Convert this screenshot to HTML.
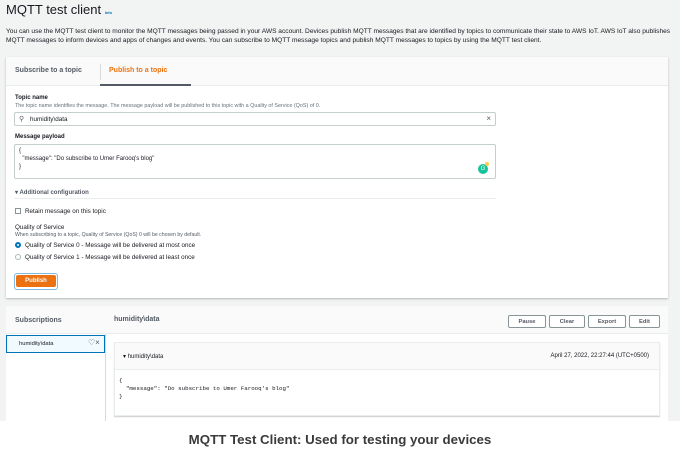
<!DOCTYPE html>
<html><head><style>
*{box-sizing:border-box;margin:0;padding:0}
body{width:680px;height:452px;background:#fff;font-family:"Liberation Sans",sans-serif;color:#16191f;position:relative;overflow:hidden}
.bg{position:absolute;left:0;top:0;width:680px;height:421px;background:#f2f3f3}
.abs{position:absolute}
.t{font-size:6.3px;white-space:nowrap}
.panel{position:absolute;background:#fff;box-shadow:0 1px 2px rgba(0,0,0,.25)}
.inp{position:absolute;border:1px solid #c6cdce;background:#fff;border-radius:2px}
.btn{position:absolute;border:1px solid #879596;background:#fff;font-size:5.8px;font-weight:bold;color:#545b64;text-align:center;line-height:12px;height:13px;border-radius:2px}
</style></head><body>
<div class="bg"></div>
<div class="abs" style="left:6px;top:2px;font-size:13px;color:#16191f">MQTT test client <span style="font-size:4px;color:#0073bb;font-weight:bold">Info</span></div>
<div class="abs t" style="left:6px;top:27px;color:#16191f;line-height:9px;font-size:6.6px">You can use the MQTT test client to monitor the MQTT messages being passed in your AWS account. Devices publish MQTT messages that are identified by topics to communicate their state to AWS IoT. AWS IoT also publishes<br>MQTT messages to inform devices and apps of changes and events. You can subscribe to MQTT message topics and publish MQTT messages to topics by using the MQTT test client.</div>

<div class="panel" style="left:6px;top:57px;width:662px;height:241px">
 <div class="abs" style="left:0;top:0;width:662px;height:29px;background:#fafafa;border-bottom:1px solid #eaeded"></div>
 <div class="abs" style="left:9px;top:10px;font-size:7px;font-weight:bold;color:#545b64">Subscribe to a topic</div>
 <div class="abs" style="left:94px;top:7px;width:1px;height:16px;background:#d5dbdb"></div>
 <div class="abs" style="left:103px;top:10px;font-size:7px;font-weight:bold;color:#ec7211">Publish to a topic</div>
 <div class="abs" style="left:94px;top:27px;width:91px;height:2px;background:#545b64"></div>
 <div class="abs" style="left:9px;top:38px;font-size:6px;font-weight:bold">Topic name</div>
 <div class="abs t" style="left:9px;top:46px;font-size:5.4px;color:#687078">The topic name identifies the message. The message payload will be published to this topic with a Quality of Service (QoS) of 0.</div>
 <div class="inp" style="left:8px;top:55px;width:482px;height:14px"><span class="abs t" style="left:4px;top:2px;font-size:7px;color:#545b64">⚲</span><span class="abs t" style="left:15px;top:3px;font-size:6.3px">humidity\data</span><span class="abs" style="right:4px;top:1px;font-size:8px;color:#545b64">×</span></div>
 <div class="abs" style="left:9px;top:77px;font-size:6px;font-weight:bold">Message payload</div>
 <div class="inp" style="left:8px;top:87px;width:482px;height:35px"><div class="abs t" style="left:4px;top:2px;line-height:8px;font-size:6px">{<br>&nbsp;&nbsp;"message": "Do subscribe to Umer Farooq's blog"<br>}</div>
 <div class="abs" style="left:463px;top:19px;width:10px;height:10px;border-radius:50%;background:#15c39a;color:#fff;font-size:6px;text-align:center;line-height:10px">G</div>
 <div class="abs" style="left:470px;top:17px;width:4px;height:4px;border-radius:50%;background:#ffc94d"></div></div>
 <div class="abs t" style="left:9px;top:132px;font-size:6px;font-weight:bold;color:#545b64">▾ Additional configuration</div>
 <div class="abs" style="left:8px;top:141px;width:482px;height:1px;background:#eaeded"></div>
 <div class="abs" style="left:9px;top:151px;width:6px;height:6px;border:1px solid #879596"></div>
 <div class="abs t" style="left:19px;top:151px">Retain message on this topic</div>
 <div class="abs t" style="left:9px;top:167px">Quality of Service</div>
 <div class="abs t" style="left:9px;top:175px;font-size:5.2px;color:#545b64">When subscribing to a topic, Quality of Service (QoS) 0 will be chosen by default.</div>
 <div class="abs" style="left:9px;top:185px;width:6px;height:6px;border-radius:50%;border:2px solid #0073bb"></div>
 <div class="abs t" style="left:19px;top:185px">Quality of Service 0 - Message will be delivered at most once</div>
 <div class="abs" style="left:9px;top:197px;width:6px;height:6px;border-radius:50%;border:1px solid #aab7b8"></div>
 <div class="abs t" style="left:19px;top:197px">Quality of Service 1 - Message will be delivered at least once</div>
 <div class="abs" style="left:8px;top:216px;width:44px;height:17px;border:1.5px solid #7fb8e0;border-radius:3px;padding:1px"><div style="background:#ec7211;color:#fff;font-size:6px;font-weight:bold;text-align:center;line-height:12px;height:12px;border-radius:2px">Publish</div></div>
</div>

<div class="panel" style="left:6px;top:306px;width:662px;height:115px;box-shadow:none">
 <div class="abs" style="left:0;top:0;width:662px;height:28px;background:#fafafa;border-bottom:1px solid #eaeded"></div>
 <div class="abs" style="left:9px;top:11px;font-size:7px;font-weight:bold;color:#545b64">Subscriptions</div>
 <div class="abs" style="left:108px;top:10px;font-size:7px;font-weight:bold;color:#545b64">humidity\data</div>
 <div class="btn" style="left:502px;top:9px;width:38px">Pause</div>
 <div class="btn" style="left:543px;top:9px;width:36px">Clear</div>
 <div class="btn" style="left:582px;top:9px;width:38px">Export</div>
 <div class="btn" style="left:623px;top:9px;width:31px">Edit</div>
 <div class="abs" style="left:99px;top:28px;width:1px;height:87px;background:#d5dbdb"></div>
 <div class="abs" style="left:0;top:29px;width:99px;height:18px;background:#f1faff;border:1px solid #0073bb"></div>
 <div class="abs t" style="left:13px;top:35px;font-size:5.8px">humidity\data</div>
 <div class="abs" style="left:82px;top:32px;font-size:8px;color:#545b64">♡×</div>
 <div class="abs" style="left:108px;top:36px;width:546px;height:74px;border:1px solid #eaeded;box-shadow:0 1px 1px rgba(0,0,0,.2)">
  <div class="abs" style="left:0;top:0;width:544px;height:27px;background:#fafafa;border-bottom:1px solid #eaeded"></div>
  <div class="abs t" style="left:8px;top:10px;font-size:6px">▾ humidity\data</div>
  <div class="abs t" style="right:10px;top:10px;font-size:6px">April 27, 2022, 22:27:44 (UTC+0500)</div>
  <div class="abs t" style="left:4px;top:34px;font-family:'Liberation Mono',monospace;font-size:5.8px;line-height:8px">{<br>&nbsp;&nbsp;"message": "Do subscribe to Umer Farooq's blog"<br>}</div>
 </div>
</div>
<div class="abs" style="left:0;top:432px;width:680px;text-align:center;font-size:13.3px;font-weight:bold;color:#3a3a3a">MQTT Test Client: Used for testing your devices</div>
</body></html>
